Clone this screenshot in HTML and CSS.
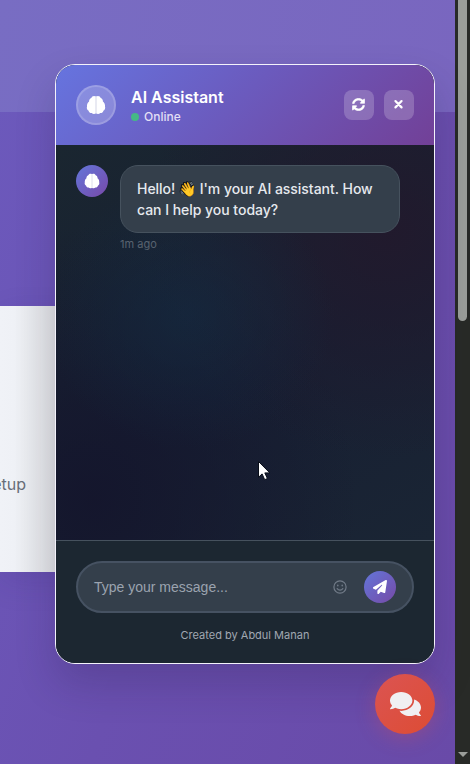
FILE: index.html
```html
<!DOCTYPE html>
<html lang="en">
<head>
<meta charset="utf-8">
<title>AI Assistant</title>
<link rel="stylesheet" href="styles.css">
</head>
<body>
<svg width="0" height="0" class="defs" aria-hidden="true">
  <symbol id="brain" viewBox="0 0 20 20"><path d="M10 1.6C8.2.4 5.9 1 5.4 2.9 3.7 3.4 2.9 5 3.1 6.6 1.5 7.9.7 9.8 1 11.6c-.6 1.8.1 3.5 1.6 4.2.3 1.5 1.6 2.4 3.1 2.3 1.2 1.2 3.1 1.2 4.3.2 1.2 1 3.1 1 4.3-.2 1.5.1 2.8-.8 3.1-2.3 1.5-.7 2.2-2.4 1.6-4.2.3-1.8-.5-3.7-2.1-5 .2-1.6-.6-3.2-2.3-3.7C14.1 1 11.8.4 10 1.6z"/><path class="fold" d="M10 1.8v16.4"/></symbol>
</svg>
<main class="page">
  <div class="hero"></div>
  <section class="card"><p>Easy Setup</p></section>
</main>
<aside class="scrollbar"><div class="thumb"></div><div class="arrow"></div></aside>

<section class="chat">
  <header class="chat-header">
    <div class="avatar"><svg><use href="#brain"/></svg></div>
    <div class="identity">
      <h1>AI Assistant</h1>
      <div class="status"><i></i>Online</div>
    </div>
    <div class="actions">
      <button aria-label="Refresh"><svg viewBox="0 0 512 512"><path class="sync" d="M370.72 133.28C339.458 104.008 298.888 87.962 255.848 88c-77.458.068-144.328 53.178-162.791 126.85-1.344 5.363-6.122 9.15-11.651 9.15H24.103c-7.498 0-13.194-6.807-11.807-14.176C33.933 94.924 134.813 8 256 8c66.448 0 126.791 26.136 171.315 68.685L463.03 40.97C478.149 25.851 504 36.559 504 57.941V192c0 13.255-10.745 24-24 24H345.941c-21.382 0-32.09-25.851-16.971-40.971l41.75-41.749zM32 296h134.059c21.382 0 32.09 25.851 16.971 40.971l-41.75 41.75c31.262 29.273 71.835 45.319 114.876 45.28 77.418-.07 144.315-53.144 162.787-126.849 1.344-5.363 6.122-9.15 11.651-9.15h57.304c7.498 0 13.194 6.807 11.807 14.176C478.067 417.076 377.187 504 256 504c-66.448 0-126.791-26.136-171.315-68.685L48.97 471.03C33.851 486.149 8 475.441 8 454.059V320c0-13.255 10.745-24 24-24z"/></svg></button>
      <button aria-label="Close"><svg viewBox="0 0 14 14"><path class="cross" d="M3.7 3.3l6.6 6.8M10.3 3.3l-6.6 6.8"/></svg></button>
    </div>
  </header>
  <div class="messages">
    <div class="bot"><svg><use href="#brain"/></svg></div>
    <div class="message">
      <div class="bubble">Hello! <span class="emoji">👋</span> I'm your AI assistant. How can I help you today?</div>
      <time>1m ago</time>
    </div>
  </div>
  <footer class="composer">
    <div class="field">
      <span class="placeholder">Type your message...</span>
      <svg class="smile" viewBox="0 0 14 14"><circle cx="7" cy="7" r="6.1"/><path d="M4.2 8.6c1.4 2 4.2 2 5.6 0"/><path class="eyes" d="M4.8 5.3v.5M9.2 5.3v.5"/></svg>
      <button class="send" aria-label="Send"><svg viewBox="0 0 512 512"><path d="M498.1 5.6c10.1 7 15.4 19.1 13.5 31.2l-64 416c-1.5 9.7-7.4 18.2-16 23s-18.9 5.4-28 1.6L284 427.7l-68.5 74.1c-8.9 9.7-22.9 12.9-35.2 8.1S160 493.2 160 480V396.4c0-4 1.5-7.8 4.2-10.7L331.8 202.8c5.8-6.3 5.6-16-.4-22s-15.7-6.4-22-.7L106 360.8 17.7 316.6C7.1 311.3 .3 300.7 0 288.9s5.9-22.8 16.1-28.7l448-256c10.7-6.1 23.9-5.5 34 1.4z"/></svg></button>
    </div>
    <p class="credit">Created by Abdul Manan</p>
  </footer>
</section>

<button class="launcher" aria-label="Chat"><svg viewBox="0 0 576 512"><path d="M416 192c0-88.4-93.1-160-208-160S0 103.6 0 192c0 34.3 14.1 65.9 38 92-13.4 30.2-35.5 54.2-35.8 54.5-2.2 2.3-2.8 5.7-1.5 8.7S4.8 352 8 352c36.6 0 66.9-12.3 88.7-25 32.2 15.7 70.3 25 111.3 25 114.9 0 208-71.6 208-160zm122 220c23.9-26 38-57.7 38-92 0-66.9-53.5-124.2-129.3-148.1.9 6.6 1.3 13.3 1.3 20.1 0 105.9-107.7 192-240 192-10.8 0-21.3-.8-31.7-1.9C207.8 439.6 281.8 480 368 480c41 0 79.1-9.2 111.3-25 21.8 12.7 52.1 25 88.7 25 3.2 0 6.1-1.9 7.3-4.8 1.3-2.9.7-6.3-1.5-8.7-.3-.3-22.4-24.2-35.8-54.5z"/></svg></button>
<svg class="pointer" viewBox="0 0 14 22"><path d="M1.5 1.5v15.8l3.6-3.4 2.6 5.8 2.7-1.2-2.6-5.6h5z"/></svg>
</body>
</html>
```
FILE: styles.css
```css
* { box-sizing: border-box; }
body {
  margin: 0;
  height: 764px;
  overflow: hidden;
  position: relative;
  display: flex;
  font-family: Inter, "Liberation Sans", sans-serif;
  background: #6c4fae;
}
h1, p { margin: 0; }
button { border: 0; padding: 0; display: grid; place-items: center; }
svg { display: block; fill: #fff; }
.defs { position: absolute; }
.fold { stroke: #d3d5e6; stroke-width: 1; }

.page {
  width: 455px;
  height: 764px;
  background: linear-gradient(110deg, #6c5abd 0%, #6a50b0 50%, #694aa8 100%);
}
.hero { height: 112px; background: linear-gradient(100deg, #786dc3, #7966bf); }
.card {
  width: 220px;
  height: 266px;
  margin-top: 194px;
  padding: 166px 0 0;
  background: linear-gradient(90deg, #f0f2f7 0, #eff1f6 14px, #e6e8eb 36px, #dfe1e3 56px);
  box-shadow: 0 10px 30px rgba(50, 30, 110, .13);
}
.card p {
  width: 26px;
  display: flex;
  justify-content: flex-end;
  white-space: nowrap;
  font-size: 16px;
  line-height: 24px;
  color: #686e79;
}

.scrollbar {
  width: 15px;
  display: flex;
  flex-direction: column;
  align-items: center;
  justify-content: space-between;
  background: #282a27;
}
.thumb { width: 9px; height: 321px; border-radius: 0 0 5px 5px; background: #9b9e9a; }
.arrow {
  margin-bottom: 7px;
  border: 5px solid transparent;
  border-top-color: #9b9e9a;
  border-bottom: 0;
}

.chat {
  position: absolute;
  left: 55px;
  top: 64px;
  width: 380px;
  height: 600px;
  display: flex;
  flex-direction: column;
  overflow: hidden;
  border: 1px solid #f4f2fb;
  border-radius: 20px;
  background: #1c2731;
  box-shadow: 0 20px 40px rgba(30, 20, 60, .2);
}
.chat-header {
  height: 80px;
  flex: none;
  display: flex;
  align-items: center;
  padding: 0 20px;
  background: linear-gradient(135deg, #6674df 0%, #6b5abd 48%, #724097 100%);
}
.avatar {
  width: 40px;
  height: 40px;
  display: grid;
  place-items: center;
  border: 2px solid rgba(255, 255, 255, .16);
  border-radius: 50%;
  background: rgba(255, 255, 255, .22);
}
.avatar svg { width: 20px; height: 20px; }
.identity { margin: 4px 0 0 15px; flex: 1; color: #fff; }
.identity h1 { font-size: 16px; line-height: 19px; font-weight: 600; }
.status {
  display: flex;
  align-items: center;
  gap: 5px;
  margin-top: 1px;
  font-size: 12px;
  line-height: 18px;
  color: #e3dff5;
  font-weight: 500;
}
.status i { width: 8px; height: 8px; border-radius: 50%; background: #45b985; }
.actions { display: flex; gap: 10px; }
.actions button { width: 30px; height: 30px; border-radius: 8px; background: rgba(255, 255, 255, .2); }
.actions svg { width: 13px; height: 13px; margin: 0 1px 2px 0; }
.sync { stroke: #fff; stroke-width: 12; }
.cross { stroke: #fff; stroke-width: 2.4; stroke-linecap: round; }

.messages {
  flex: 1;
  display: flex;
  align-items: flex-start;
  padding: 20px;
  background:
    radial-gradient(ellipse at 35% 43%, rgba(20, 43, 66, .6), transparent 42%),
    radial-gradient(ellipse at 88% 22%, rgba(34, 25, 44, .9), transparent 52%),
    radial-gradient(ellipse at 10% 90%, rgba(20, 21, 44, .9), transparent 55%),
    linear-gradient(150deg, #1a2630, #171f33 55%, #1a2534);
}
.bot {
  width: 32px;
  height: 32px;
  flex: none;
  display: grid;
  place-items: center;
  border-radius: 50%;
  background: linear-gradient(135deg, #6376da, #7849a9);
}
.bot svg { width: 16px; height: 16px; }
.message { margin-left: 12px; }
.bubble {
  width: 280px;
  height: 68px;
  padding: 12px 16px;
  border: 1px solid #46525e;
  border-radius: 18px;
  background: #343f4b;
  color: #e6e9ee;
  font-size: 14px;
  line-height: 21px;
  font-weight: 500;
  letter-spacing: -.03px;
}
.emoji { filter: drop-shadow(-.7px 0 0 #14171c) drop-shadow(.5px -.5px 0 #14171c); }
time { display: block; margin-top: 4px; font-size: 11px; line-height: 14px; color: #596370; }

.composer {
  height: 123px;
  flex: none;
  padding: 20px;
  border-top: 1px solid #46525e;
  background: #1c2731;
}
.field {
  height: 52px;
  display: flex;
  align-items: center;
  padding: 0 16px;
  border: 2px solid #465262;
  border-radius: 26px;
  background: #343f4b;
}
.placeholder { flex: 1; font: 14px/20px "Liberation Sans", sans-serif; color: #9ba3af; }
.smile { width: 14px; height: 14px; margin-bottom: 1px; fill: none; stroke: #717b88; stroke-width: 1.2; stroke-linecap: round; }
.eyes { stroke-width: 1.5; }
.send {
  width: 32px;
  height: 32px;
  margin-left: 17px;
  border-radius: 50%;
  background: linear-gradient(135deg, #6376da, #764aa6);
}
.send svg { width: 14px; height: 14px; margin-bottom: 1px; }
.credit { margin-top: 15px; text-align: center; font-size: 11px; line-height: 15px; color: #a1a8b1; }

.launcher {
  position: absolute;
  left: 375px;
  top: 674px;
  width: 60px;
  height: 60px;
  border-radius: 50%;
  background: linear-gradient(135deg, #db5452, #dd4c34);
  box-shadow: 0 4px 20px rgba(220, 76, 80, .3);
}
.launcher svg { width: 31px; height: 28px; fill: #f0eff2; }
.pointer {
  position: absolute;
  left: 257px;
  top: 460px;
  width: 14px;
  height: 22px;
  stroke: #080d18;
}
```
